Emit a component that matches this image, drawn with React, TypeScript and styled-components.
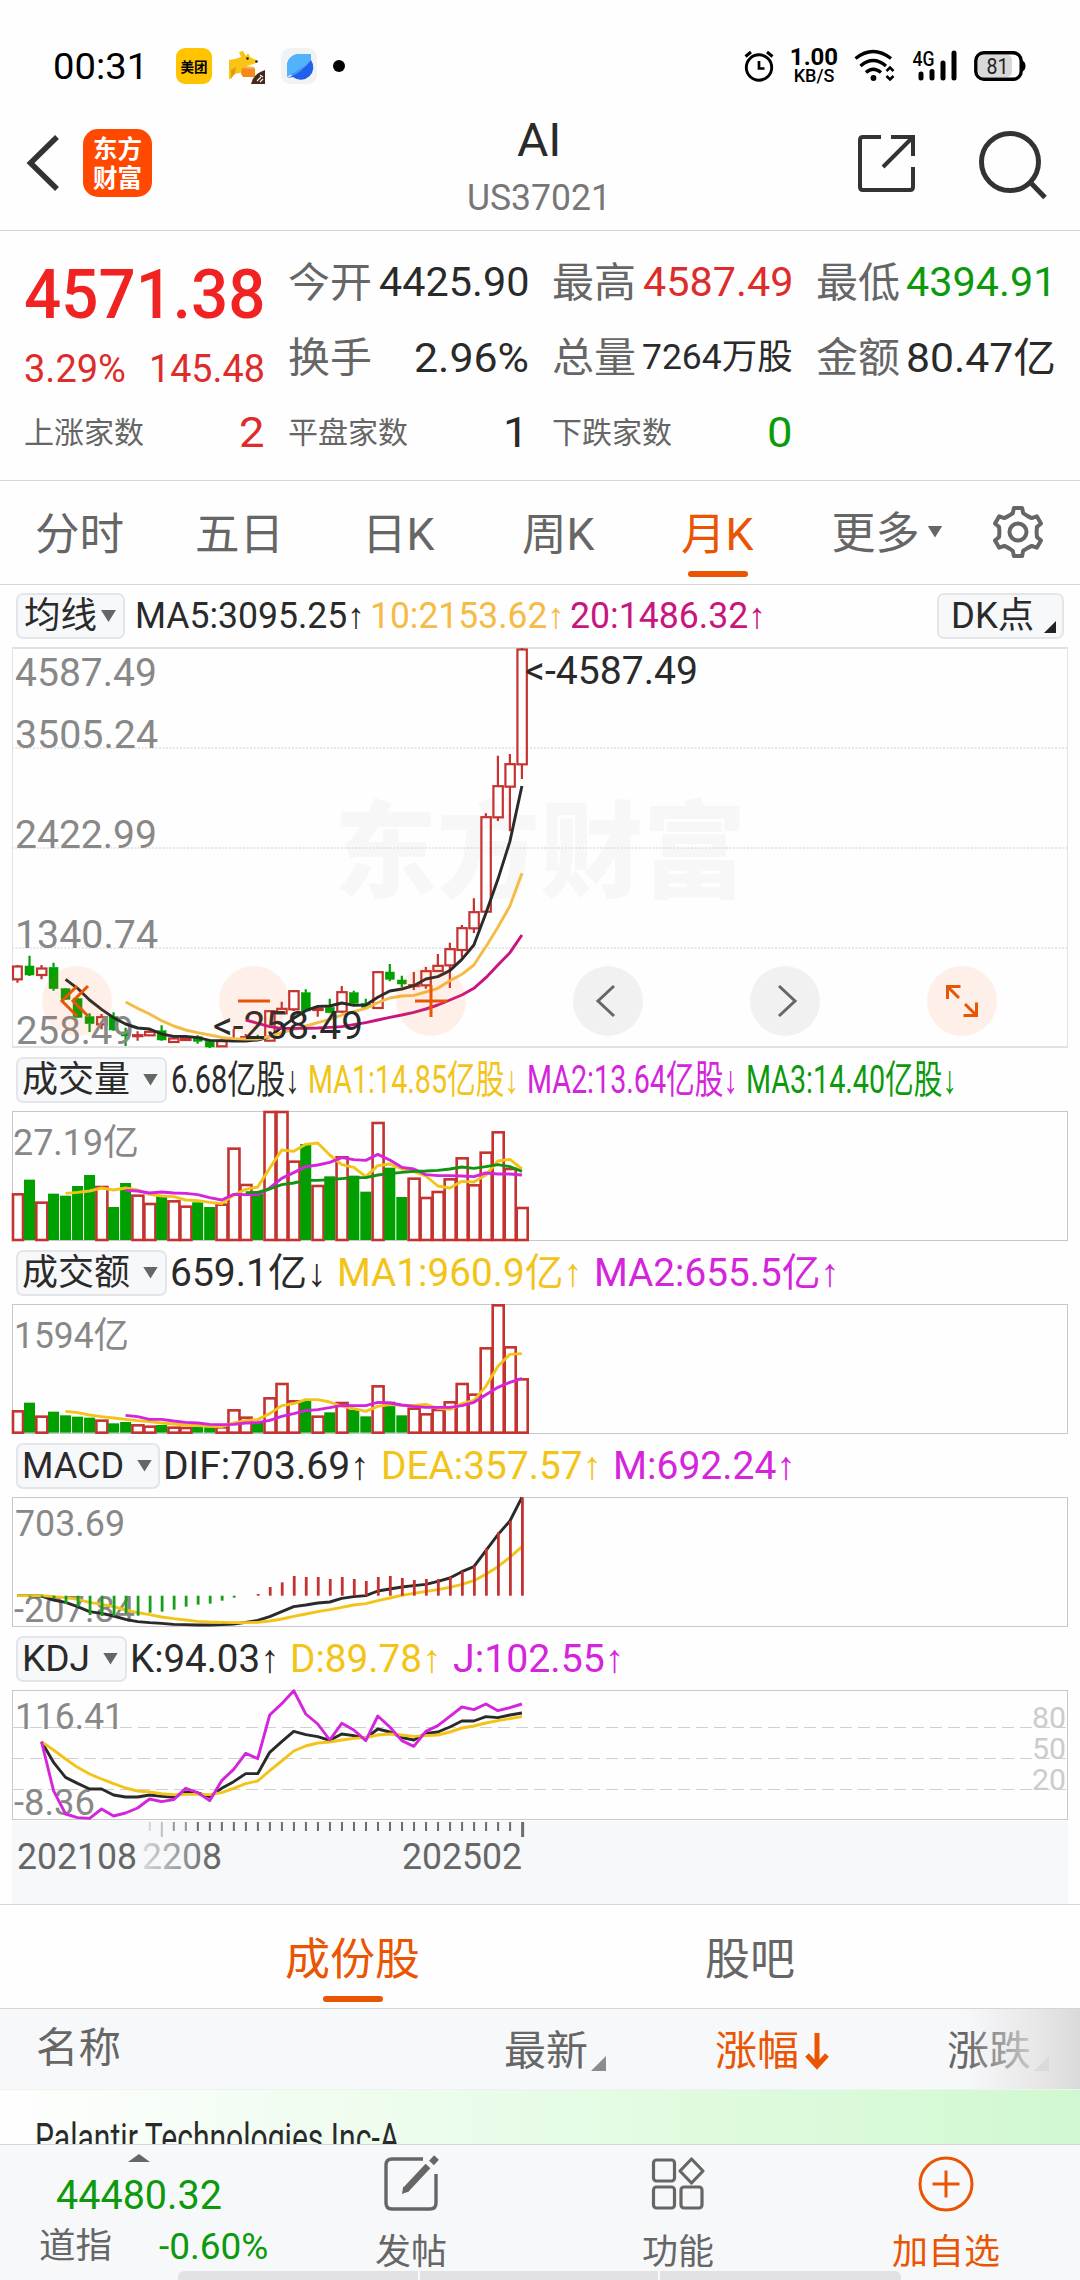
import React, { useLayoutEffect, useRef, useState } from "react";
import styled, { createGlobalStyle } from "styled-components";

const FONT = `Roboto, "Liberation Sans", "Noto Sans CJK SC", sans-serif`;
const C = {
  text: "#2a2a2a",
  label: "#666666",
  axis: "#888888",
  red: "#dd2c2c",
  green: "#0c9a0c",
  orange: "#ea5504",
  amber: "#f5bb45",
  gold: "#f2c418",
  magenta: "#c8157f",
  violet: "#d424dc",
  bar: "#c43330",
  barGreen: "#00a000",
  panel: "#f7f8fa",
  line: "#d5d5d7",
};

const Global = createGlobalStyle`
  * { box-sizing: border-box; }
  body { margin: 0; background: #fff; }
  svg { display: block; flex: none; overflow: visible; }
`;

const Screen = styled.main`
  width: 1080px;
  height: 2280px;
  overflow: hidden;
  display: flex;
  flex-direction: column;
  background: #fefefe;
  font-family: ${FONT};
  color: ${C.text};
`;

/* ---------- text that is squeezed to the width of its slot ---------- */

const Slot = styled.span<{ $w: number; $size: number; $color?: string; $weight?: number }>`
  display: block;
  flex: none;
  width: ${(p) => p.$w}px;
  font-size: ${(p) => p.$size}px;
  line-height: ${(p) => Math.round(p.$size * 1.2)}px;
  color: ${(p) => p.$color || "inherit"};
  font-weight: ${(p) => p.$weight || 400};
  white-space: pre;
`;
const Squeezed = styled.span`
  display: inline-block;
  padding-top: 1px;
  margin: 0 -1px -1px;
  transform-origin: 0 50%;
`;

type FitProps = { w: number; size: number; color?: string; weight?: number; children: React.ReactNode };

function Fit({ w, size, color, weight, children }: FitProps) {
  const ref = useRef<HTMLSpanElement>(null);
  const [k, setK] = useState(1);
  useLayoutEffect(() => {
    const measure = () => {
      if (ref.current && ref.current.offsetWidth) setK((w + 2) / ref.current.offsetWidth);
    };
    measure();
    document.fonts?.ready.then(measure);
  }, [w, size, children]);
  return (
    <Slot $w={w} $size={size} $color={color} $weight={weight}>
      <Squeezed ref={ref} style={{ transform: `scaleX(${k})` }}>
        {children}
      </Squeezed>
    </Slot>
  );
}

/* ---------- status bar ---------- */

const StatusBar = styled.div`
  height: 106px;
  padding: 26px 54px 0 54px;
  display: flex;
  align-items: center;
  justify-content: space-between;
  color: #000;
`;
const Cluster = styled.div<{ $gap: number }>`
  display: flex;
  align-items: center;
  gap: ${(p) => p.$gap}px;
`;
const MeituanBadge = styled.span`
  width: 36px;
  height: 36px;
  margin-left: 13px;
  border-radius: 9px;
  background: #ffc300;
  display: flex;
  align-items: center;
  justify-content: center;
  font: 700 13.5px/36px "Noto Sans CJK SC", sans-serif;
`;
const Dot = styled.span`
  width: 12px;
  height: 12px;
  border-radius: 50%;
  background: #000;
`;
const Speed = styled.div`
  width: 48px;
  display: flex;
  flex-direction: column;
  align-items: center;
  font-weight: 700;
  font-size: 24px;
  line-height: 20px;
  small {
    font-weight: 500;
    font-size: 18px;
    line-height: 18px;
  }
`;

const KangarooIcon = () => (
  <svg width="37" height="36" viewBox="0 0 37 36">
    <path d="M1 12 L7 11 L13 9 L11 4 L15 3 L18 8 L20 5 L22 9 L28 12 L28 15 L22 17 L17 19 L17 23 L12 25 L6 26 L3 31 L1 31Z" fill="#f9c414" />
    <path d="M3 22 L8 19 L7 26 L3 30Z" fill="#e09a10" />
    <path d="M14 20h13v9H15l-2-3z" fill="#f58a1c" />
    <path d="M14 20l3-2 9 1 1 2z" fill="#ffb24a" />
    <circle cx="19.500" cy="10.500" r="1.300" fill="#222" />
    <circle cx="28.500" cy="13.500" r="1.300" fill="#222" />
    <path d="M37 22v14H23q2-10 14-14z" fill="#46281a" />
    <path d="M29 33l4-4m-1 5l3-3m-3-4l3 2" stroke="#fff" strokeWidth="1.100" />
  </svg>
);
const BrowserIcon = () => (
  <svg width="36" height="36" viewBox="0 0 36 36">
    <rect width="36" height="36" rx="9" fill="#f1f2f4" />
    <circle cx="18" cy="18" r="12" fill="#3d97f8" />
    <path d="M6 29 V20 A12.500 12.500 0 0 1 20 6 L30 6 V14Z" fill="#52b2fb" />
    <path d="M6 30 Q20 26 30 12 A12.500 12.500 0 0 1 12 29Z" fill="#2160ea" />
  </svg>
);
const AlarmIcon = () => (
  <svg width="30" height="34" viewBox="0 0 30 34" fill="none" stroke="#000">
    <circle cx="15" cy="18.500" r="12.700" strokeWidth="2.900" />
    <path d="M15 12v7.500h5.500" strokeWidth="2.700" />
    <path d="M1.500 7.500l5.500-4.500M28.500 7.500L23 3" strokeWidth="3" />
  </svg>
);
const WifiIcon = () => (
  <svg width="42" height="34" viewBox="0 0 42 34" fill="none" stroke="#000" strokeWidth="3.300">
    <path d="M1.500 9.500Q19 -4.500 37 9.500M6.500 17Q19 6 32 17M12 23.500Q19 17 27 23.500" />
    <circle cx="19.500" cy="29" r="2.900" fill="#000" stroke="none" />
    <path d="M32.500 22l3.500-3.500 3.500 3.500M32.500 27l3.500 3.500 3.500-3.500" strokeWidth="2.600" />
  </svg>
);
const SignalIcon = () => (
  <svg width="46" height="34" viewBox="0 0 46 34">
    <text x="0.500" y="17" fontSize="20" fontWeight="500" textLength="22" lengthAdjust="spacingAndGlyphs" fontFamily="Roboto">
      4G
    </text>
    <g stroke="#000" strokeWidth="5" strokeLinecap="round">
      <path d="M9 25v4M20 22.500v6.500M31 14v15M42 4v25" />
    </g>
  </svg>
);
const BatteryIcon = () => (
  <svg width="52" height="30" viewBox="0 0 52 30">
    <rect x="1.800" y="1.800" width="45.400" height="26.400" rx="8" fill="#fff" stroke="#000" strokeWidth="3.400" />
    <rect x="4" y="4" width="34" height="22" rx="5" fill="#d8d8d8" />
    <path d="M47.500 9q4 1.500 4 6t-4 6z" />
    <text x="12.500" y="22.500" fontSize="22" textLength="22" lengthAdjust="spacingAndGlyphs" fontFamily="Roboto" fontWeight="400" fill="#222">
      81
    </text>
  </svg>
);

/* ---------- title bar ---------- */

const TitleBar = styled.header`
  height: 125px;
  padding: 0 34px 0 26px;
  border-bottom: 1px solid ${C.line};
  display: grid;
  grid-template-columns: 1fr auto 1fr;
  align-items: center;
`;
const TitleSide = styled.div<{ $end?: boolean }>`
  display: flex;
  align-items: center;
  gap: ${(p) => (p.$end ? 60 : 23)}px;
  justify-content: ${(p) => (p.$end ? "flex-end" : "flex-start")};
  padding-bottom: 11px;
`;
const TitleText = styled.h1`
  margin: 0 0 5px 6px;
  display: flex;
  flex-direction: column;
  align-items: center;
  font-weight: 400;
  gap: 8px;
`;
const Logo = styled.div`
  width: 69px;
  height: 68px;
  border-radius: 15px;
  background: #ff4800;
  color: #fff;
  display: flex;
  flex-direction: column;
  align-items: center;
  font: 700 24.5px/29px "Noto Sans CJK SC", sans-serif;
  padding-top: 4px;
`;

/* ---------- quote ---------- */

const Quote = styled.section`
  height: 250px;
  padding: 14px 25px 0;
  border-bottom: 1px solid ${C.line};
  display: grid;
  grid-template-columns: 239px 239px 239px 238px;
  column-gap: 25px;
`;
const QuoteColumn = styled.div<{ $lead?: boolean }>`
  display: flex;
  flex-direction: column;
  padding-top: ${(p) => (p.$lead ? 11 : 0)}px;
`;
const QuoteLine = styled.div<{ $h?: number }>`
  height: ${(p) => p.$h || 75}px;
  display: flex;
  align-items: center;
  justify-content: space-between;
`;

/* ---------- period tabs ---------- */

const Periods = styled.nav`
  height: 104px;
  border-bottom: 1px solid ${C.line};
  display: flex;
  color: ${C.label};
`;
const Period = styled.div<{ $on?: boolean }>`
  width: 159.500px;
  height: 103px;
  padding-top: 27px;
  display: flex;
  flex-direction: column;
  align-items: center;
  color: ${(p) => (p.$on ? C.orange : C.label)};
  &::after {
    content: "";
    width: 60px;
    height: 6px;
    margin-top: 9px;
    border-radius: 3px;
    background: ${(p) => (p.$on ? C.orange : "transparent")};
  }
`;
const More = styled.div`
  width: 194px;
  height: 103px;
  padding: 2px 0 0 35px;
  display: flex;
  align-items: center;
  gap: 9px;
`;
const SettingsSlot = styled.div`
  padding-top: 25px;
`;

const Triangle = styled.i<{ $w?: number; $h?: number; $lift?: number }>`
  width: ${(p) => p.$w || 15}px;
  height: ${(p) => p.$h || 12}px;
  margin-bottom: ${(p) => p.$lift || 0}px;
  background: #666;
  clip-path: polygon(0 0, 100% 0, 50% 100%);
`;
const Corner = styled.i<{ $s: number; $color: string }>`
  width: ${(p) => p.$s}px;
  height: ${(p) => p.$s}px;
  background: ${(p) => p.$color};
  clip-path: polygon(100% 0, 100% 100%, 0 100%);
`;

/* ---------- chart panels ---------- */

const IndicatorRow = styled.div<{ $h?: number; $gap: number }>`
  height: ${(p) => p.$h || 63}px;
  padding-left: 16px;
  display: flex;
  align-items: center;
  gap: ${(p) => p.$gap}px;
`;
const Picker = styled.div<{ $w: number; $gap: number; $after: number; $inset?: number }>`
  width: ${(p) => p.$w}px;
  height: 46px;
  margin-right: ${(p) => p.$after}px;
  padding-left: ${(p) => p.$inset ?? 5}px;
  flex: none;
  display: flex;
  align-items: center;
  gap: ${(p) => p.$gap}px;
  border: 2px solid #e3e5e9;
  border-radius: 7px;
  background: ${C.panel};
`;
const DkPicker = styled(Picker)`
  margin-left: auto;
  padding-left: 13px;
  ${Corner} {
    align-self: flex-end;
    margin-bottom: 4px;
  }
`;
const Panel = styled.div<{ $h?: number; $heavy?: boolean }>`
  position: relative;
  width: 1056px;
  height: ${(p) => p.$h || 130}px;
  margin-left: 12px;
  border: 1px solid ${(p) => (p.$heavy ? "#e2e2e2" : "#c8c8c8")};
  border-width: ${(p) => (p.$heavy ? "2px 1px 2px 1px" : "1px")};
  flex: none;
  > svg {
    margin: ${(p) => (p.$heavy ? "-2px" : "-1px")} 0 0 -1px;
    font-family: ${FONT};
  }
`;
const ChartButtons = styled.div`
  position: absolute;
  left: 29px;
  right: 70px;
  top: 317px;
  display: flex;
  justify-content: space-between;
`;
const Round = styled.button<{ $soft?: boolean }>`
  width: 70px;
  height: 70px;
  padding: 0;
  border: 0;
  border-radius: 50%;
  display: grid;
  place-items: center;
  background: ${(p) => (p.$soft ? "rgba(0,0,0,.05)" : "rgba(255,100,20,.09)")};
`;

const STEP = 12.01;
const cx = (i: number) => 5.5 + i * STEP;

/* [rising, high, body top, body bottom, low], three units to a pixel */
const candles: [number, number, number, number, number][] = [
  [1, 975, 978, 1018, 1028], [0, 947, 978, 1005, 1008], [1, 975, 984, 1005, 1018], [0, 968, 982, 1046, 1052],
  [0, 1044, 1046, 1078, 1080], [0, 1074, 1076, 1132, 1134], [0, 1120, 1130, 1151, 1176], [1, 1122, 1130, 1153, 1168],
  [0, 1117, 1130, 1170, 1172], [0, 1163, 1176, 1188, 1218], [1, 1174, 1184, 1188, 1202], [1, 1166, 1174, 1186, 1188],
  [0, 1156, 1172, 1200, 1202], [1, 1188, 1194, 1206, 1208], [1, 1186, 1192, 1200, 1202], [0, 1186, 1190, 1204, 1211],
  [0, 1198, 1204, 1221, 1224], [1, 1198, 1202, 1219, 1220], [1, 1167, 1197, 1202, 1204], [1, 1182, 1190, 1196, 1198],
  [0, 1184, 1190, 1200, 1202], [1, 1110, 1112, 1202, 1204], [1, 1085, 1105, 1120, 1122], [1, 1050, 1052, 1108, 1113],
  [0, 1048, 1058, 1113, 1114], [1, 1098, 1104, 1110, 1130], [0, 1076, 1102, 1118, 1120], [1, 1038, 1055, 1115, 1118],
  [0, 1052, 1058, 1090, 1092], [0, 1076, 1090, 1102, 1104], [1, 993, 995, 1104, 1106], [0, 972, 996, 1018, 1024],
  [0, 1007, 1020, 1032, 1042], [1, 996, 1034, 1038, 1050], [1, 981, 992, 1036, 1046], [1, 942, 976, 993, 995],
  [1, 908, 926, 976, 1044], [1, 855, 863, 930, 953], [1, 775, 815, 865, 879], [1, 520, 530, 815, 817],
  [1, 347, 437, 532, 543], [1, 342, 371, 440, 574], [1, 24, 27, 373, 417],
];
const rising = candles.map((c) => c[0] === 1);

const ma5 = [1018, 1045, 1080, 1108, 1133, 1152, 1164, 1167, 1182, 1189, 1189, 1193, 1201, 1202, 1203, 1203, 1200, 1190, 1162, 1135, 1112, 1099, 1098, 1089, 1096, 1095, 1072, 1053, 1047, 1037, 1017, 1010, 992, 958, 915, 820, 718, 604, 438];
const ma10 = [1086, 1105, 1122, 1142, 1158, 1170, 1178, 1185, 1192, 1196, 1197, 1197, 1190, 1178, 1168, 1158, 1148, 1138, 1125, 1115, 1105, 1088, 1074, 1068, 1066, 1056, 1045, 1022, 1003, 975, 920, 862, 798, 700];
const ma20 = [1140, 1150, 1160, 1165, 1165, 1165, 1164, 1162, 1160, 1154, 1148, 1140, 1132, 1125, 1117, 1107, 1095, 1080, 1065, 1045, 1013, 975, 938, 885];

const volume = [431, 390, 456, 432, 438, 409, 376, 409, 472, 400, 435, 460, 440, 452, 468, 458, 472, 462, 294, 403, 432, 184, 184, 333, 283, 406, 380, 320, 378, 426, 217, 354, 442, 384, 442, 424, 386, 323, 404, 306, 245, 355, 472];
const vol1 = [430, 427, 423, 414, 420, 414, 420, 433, 438, 440, 450, 452, 457, 461, 435, 418, 411, 355, 300, 304, 283, 279, 315, 344, 352, 380, 347, 342, 357, 365, 378, 408, 414, 394, 396, 375, 333, 328, 357];
const vol2 = [421, 423, 429, 426, 429, 430, 434, 443, 450, 433, 434, 434, 414, 385, 368, 350, 345, 337, 323, 329, 331, 313, 330, 352, 357, 374, 377, 377, 378, 380, 369, 372, 372, 375];
const vol3 = [428, 427, 417, 404, 399, 391, 391, 389, 386, 383, 383, 375, 371, 367, 364, 363, 361, 357, 351, 355, 350, 344, 350, 364];

const amount = [1082, 1059, 1098, 1086, 1097, 1101, 1104, 1110, 1121, 1117, 1124, 1128, 1126, 1131, 1132, 1132, 1133, 1130, 1079, 1101, 1118, 1043, 1000, 1052, 1052, 1098, 1088, 1057, 1080, 1100, 1007, 1056, 1097, 1074, 1091, 1078, 1055, 1000, 1032, 893, 764, 890, 986];
const amt1 = [1085, 1089, 1096, 1101, 1105, 1109, 1113, 1116, 1120, 1123, 1126, 1128, 1130, 1131, 1120, 1113, 1110, 1092, 1068, 1062, 1050, 1050, 1057, 1070, 1077, 1085, 1070, 1065, 1067, 1067, 1064, 1076, 1079, 1062, 1052, 1010, 950, 914, 912];
const amt2 = [1097, 1101, 1109, 1109, 1114, 1118, 1120, 1124, 1125, 1124, 1120, 1119, 1112, 1100, 1092, 1083, 1080, 1074, 1067, 1068, 1068, 1058, 1060, 1066, 1070, 1073, 1073, 1073, 1068, 1058, 1035, 1013, 998, 986];

const macd = [467, 470, 472, 476, 492, 500, 525, 528, 528, 520, 527, 518, 515, 509, 500, 494, 491, 482, 473, 467, 462, 441, 427, 408, 411, 411, 417, 411, 417, 423, 411, 408, 414, 420, 417, 417, 410, 394, 378, 325, 277, 243, 172];
const dif = [467, 467, 468, 480, 487, 500, 515, 520, 528, 538, 545, 548, 550, 553, 554, 555, 555, 554, 552, 547, 541, 530, 515, 500, 495, 489, 486, 475, 470, 467, 453, 447, 441, 437, 433, 424, 414, 395, 380, 332, 284, 243, 172];
const dea = [467, 467, 467, 470, 473, 478, 487, 493, 500, 510, 518, 524, 531, 536, 540, 544, 546, 547, 548, 548, 547, 543, 537, 529, 522, 515, 509, 502, 495, 491, 482, 474, 466, 460, 454, 449, 442, 433, 422, 403, 380, 352, 320];

const kdjK = [905, 967, 1012, 1030, 1047, 1047, 1065, 1071, 1071, 1065, 1069, 1072, 1056, 1059, 1070, 1045, 1025, 1001, 1001, 937, 905, 874, 884, 890, 901, 882, 887, 895, 867, 876, 893, 900, 880, 876, 861, 843, 843, 830, 833, 825, 819];
const kdjD = [905, 930, 957, 982, 1002, 1017, 1031, 1044, 1053, 1056, 1061, 1064, 1063, 1063, 1064, 1058, 1045, 1031, 1023, 992, 963, 933, 918, 909, 906, 900, 895, 893, 885, 882, 885, 889, 887, 885, 876, 864, 858, 849, 842, 836, 830];
const kdjJ = [905, 1052, 1122, 1133, 1135, 1107, 1128, 1119, 1104, 1077, 1085, 1079, 1045, 1058, 1082, 1022, 988, 940, 956, 825, 791, 752, 822, 852, 900, 850, 870, 902, 828, 861, 902, 919, 874, 857, 829, 801, 809, 792, 812, 803, 792];

type TrendProps = { data: number[]; top: number; color: string; from?: number };
const Trend = ({ data, top, color, from }: TrendProps) => {
  const start = from ?? 43 - data.length;
  return (
    <polyline
      fill="none"
      stroke={color}
      strokeWidth="2.900"
      strokeLinejoin="round"
      points={data.map((v, i) => `${cx(start + i)},${(v - top) / 3}`).join(" ")}
    />
  );
};

const Bars = ({ data, top, base }: { data: number[]; top: number; base: number }) => (
  <>
    {data.map((v, i) => {
      const y = (v - top) / 3;
      const h = (base - v) / 3;
      return rising[i] ? (
        <rect key={i} x={Math.max(cx(i) - 5.2, 1)} y={y + 1} width={i ? 11 : 10} height={h} fill="#fff" stroke={C.bar} strokeWidth="2.600" />
      ) : (
        <rect key={i} x={cx(i) - 5.5} y={y} width="11" height={h + 1} fill={C.barGreen} />
      );
    })}
  </>
);

type TagProps = { x: number; y: number; w: number; size?: number; color?: string; children: string };
const Tag = ({ x, y, w, size = 36, color = C.axis, children }: TagProps) => (
  <text x={x} y={y} fontSize={size} fill={color} textLength={w} lengthAdjust="spacingAndGlyphs">
    {children}
  </text>
);

const PriceChart = () => (
  <svg width="1056" height="401" viewBox="0 0 1056 401">
    <text x="322" y="242" fontSize="105" fontWeight="900" textLength="412" lengthAdjust="spacingAndGlyphs" fill="#f7f7f7" fontFamily="Noto Sans CJK SC">
      东方财富
    </text>
    {[101, 201, 301].map((y) => (
      <line key={y} x1="0" x2="1056" y1={y} y2={y} stroke="#dedede" strokeWidth="1.500" strokeDasharray="2 1.500" />
    ))}
    {candles.map(([up, hi, t, b, lo], i) => {
      const y = (v: number) => (v - 21) / 3;
      const color = up ? C.bar : C.barGreen;
      return (
        <g key={i} stroke={color} strokeWidth="2.200">
          <path d={`M${cx(i)} ${y(hi)}V${y(t)}M${cx(i)} ${y(b)}V${y(lo)}`} />
          {up ? (
            <rect x={Math.max(cx(i) - 4.5, 1)} y={y(t) + 0.5} width={i ? 9.4 : 8.8} height={Math.max(y(b) - y(t) - 0.5, 1)} fill="#fff" fillOpacity="0.500" />
          ) : (
            <rect x={cx(i) - 4.5} y={y(t)} width="9" height={Math.max(y(b) - y(t), 1)} strokeWidth="0.500" fill={color} />
          )}
        </g>
      );
    })}
    <Tag x={3} y={39} w={142} size={39}>4587.49</Tag>
    <Tag x={3} y={101} w={143} size={39}>3505.24</Tag>
    <Tag x={3} y={201} w={142} size={39}>2422.99</Tag>
    <Tag x={3} y={301} w={143} size={39}>1340.74</Tag>
    <Tag x={4} y={397} w={118} size={39}>258.49</Tag>
    <Trend data={ma5} top={21} color={C.text} />
    <Trend data={ma10} top={21} color={C.amber} />
    <Trend data={ma20} top={21} color={C.magenta} />
    <Tag x={513} y={37} w={173} size={39} color={C.text}>{"<-4587.49"}</Tag>
    <Tag x={201} y={392} w={150} size={39} color={C.text}>{"<-258.49"}</Tag>
  </svg>
);

const VolumeChart = () => (
  <svg width="1056" height="130" viewBox="0 0 1056 130">
    <Bars data={volume} top={184} base={568} />
    <Tag x={1} y={43.5} w={126}>27.19亿</Tag>
    <Trend data={vol1} top={183} color={C.gold} />
    <Trend data={vol2} top={183} color={C.violet} />
    <Trend data={vol3} top={183} color="#129412" />
  </svg>
);

const AmountChart = () => (
  <svg width="1056" height="130" viewBox="0 0 1056 130">
    <Bars data={amount} top={763} base={1146} />
    <Tag x={2} y={44} w={115}>1594亿</Tag>
    <Trend data={amt1} top={763} color={C.gold} />
    <Trend data={amt2} top={763} color={C.violet} />
  </svg>
);

const MacdChart = () => (
  <svg width="1056" height="130" viewBox="0 0 1056 130">
    <Tag x={3} y={39} w={110}>703.69</Tag>
    <Tag x={2} y={125} w={121}>-207.84</Tag>
    <Trend data={dif} top={171} color={C.text} />
    <Trend data={dea} top={171} color={C.gold} />
    {macd.map((v, i) => (
      <line key={i} x1={cx(i) + 0.5} x2={cx(i) + 0.5} y1={98.7} y2={(v - 171) / 3} stroke={v < 467 ? C.bar : "#1c9c1c"} strokeWidth="2.800" />
    ))}
  </svg>
);

const KdjChart = () => (
  <svg width="1056" height="130" viewBox="0 0 1056 130">
    {[37.5, 68.5, 99.5].map((y, i) => (
      <g key={y}>
        <line x1="0" x2="1054" y1={y} y2={y} stroke="#cfcfcf" strokeDasharray="12 6" />
        <Tag x={1020} y={y + 0.5} w={34} size={30} color="#cccccc">{["80", "50", "20"][i]}</Tag>
      </g>
    ))}
    <Tag x={3} y={39} w={109}>116.41</Tag>
    <Tag x={2} y={124.5} w={81}>-8.36</Tag>
    <Trend data={kdjK} top={750} color={C.text} from={2} />
    <Trend data={kdjD} top={750} color={C.gold} from={2} />
    <Trend data={kdjJ} top={750} color={C.violet} from={2} />
  </svg>
);

const TimeAxis = styled.div`
  width: 1056px;
  height: 84px;
  margin-left: 12px;
  border-top: 1px solid #fefefe;
  background: ${C.panel};
  flex: none;
  svg {
    font-family: ${FONT};
  }
`;
const AxisMarks = () => (
  <svg width="1056" height="82" viewBox="0 0 1056 82">
    <defs>
      <linearGradient id="fade" gradientUnits="userSpaceOnUse" x1="125" x2="200" y1="0" y2="0">
        <stop offset="0" stopColor="#666" stopOpacity="0.150" />
        <stop offset="1" stopColor="#666" />
      </linearGradient>
    </defs>
    {Array.from({ length: 32 }, (_, n) => n + 11).map((i) => (
      <rect
        key={i}
        x={cx(i) - 0.8}
        y="1"
        width={i === 42 ? 3 : 2}
        height={i === 12 || i === 42 ? 15 : 9}
        fill="#6c6c6c"
        opacity={i === 11 ? 0.25 : i === 12 ? 0.4 : i < 15 ? 0.7 : 1}
      />
    ))}
    <Tag x={5} y={48} w={120} color={C.label}>202108</Tag>
    <Tag x={130} y={48} w={80} color="url(#fade)">2208</Tag>
    <Tag x={390} y={48} w={120} color={C.label}>202502</Tag>
  </svg>
);

/* ---------- constituents ---------- */

const SubTabs = styled.nav`
  height: 105px;
  border-top: 1px solid ${C.line};
  border-bottom: 1px solid ${C.line};
  padding-left: 154px;
  display: flex;
`;
const SubTab = styled(Period)`
  width: 397px;
  height: 102px;
  padding-top: 28px;
  &::after {
    margin-top: 9px;
  }
`;
const TableHead = styled.div`
  position: relative;
  height: 81px;
  padding: 0 31px 2px 37px;
  display: flex;
  align-items: center;
  color: ${C.label};
  background: ${C.panel};
  border-bottom: 1px solid #f0f1f3;
  &::after {
    content: "";
    position: absolute;
    inset: 0 0 0 auto;
    width: 116px;
    background: linear-gradient(90deg, rgba(240, 240, 240, 0), rgba(228, 228, 228, 0.8) 60%, #dadada);
  }
`;
const HeadCell = styled.div<{ $left: number; $on?: boolean }>`
  margin-left: ${(p) => p.$left}px;
  padding-top: 6px;
  display: flex;
  align-items: center;
  gap: 4px;
  color: ${(p) => (p.$on ? C.orange : C.label)};
  ${Corner} {
    align-self: flex-end;
    margin-bottom: 5px;
  }
`;
const StockRow = styled.div`
  height: 54px;
  padding: 24px 0 0 36px;
  display: flex;
  overflow: hidden;
  background: linear-gradient(90deg, #fefefe, #e9fce9 45%, #d0f8d0);
`;

/* ---------- bottom bar ---------- */

const BottomBar = styled.footer`
  position: relative;
  height: 136px;
  border-top: 1px solid ${C.line};
  background: ${C.panel};
  display: flex;
  color: ${C.label};
`;
const IndexBox = styled.div`
  width: 277px;
  padding-top: 9px;
  display: flex;
  flex-direction: column;
  align-items: center;
`;
const UpMark = styled(Triangle)`
  transform: rotate(180deg);
`;
const IndexRow = styled.div`
  display: flex;
  align-items: center;
  gap: 49px;
  padding: 4px 0 0 40px;
  align-self: flex-start;
`;
const Action = styled.div<{ $on?: boolean }>`
  width: 267.500px;
  padding-top: 11px;
  display: flex;
  flex-direction: column;
  align-items: center;
  gap: 19px;
  color: ${(p) => (p.$on ? C.orange : C.label)};
`;
const HomeHandle = styled.div`
  position: absolute;
  left: 178px;
  bottom: 0;
  width: 723px;
  height: 9px;
  border-radius: 6px 6px 0 0;
  background: linear-gradient(90deg, #e2e2e4 240px, #fafafa 240px 242px, #e2e2e4 242px 480px, #fafafa 480px 482px, #e2e2e4 482px);
`;

const teeth = (() => {
  const pts: string[] = [];
  for (let i = 0; i < 6; i++) {
    const a = (i * Math.PI) / 3 - Math.PI / 2;
    [[-0.27, 19.5], [-0.17, 24.5], [0.17, 24.5], [0.27, 19.5], [0.52, 18.6]].forEach(([d, r]) =>
      pts.push(`${(26 + r * Math.cos(a + d)).toFixed(1)},${(26 + r * Math.sin(a + d)).toFixed(1)}`)
    );
  }
  return pts.join(" ");
})();

export default function App() {
  return (
    <>
      <Global />
      <Screen>
        <StatusBar>
          <Cluster $gap={16}>
            <Fit w={93} size={37}>00:31</Fit>
            <MeituanBadge>美团</MeituanBadge>
            <KangarooIcon />
            <BrowserIcon />
            <Dot />
          </Cluster>
          <Cluster $gap={16}>
            <AlarmIcon />
            <Speed>
              1.00
              <small>KB/S</small>
            </Speed>
            <WifiIcon />
            <SignalIcon />
            <BatteryIcon />
          </Cluster>
        </StatusBar>

        <TitleBar>
          <TitleSide>
            <svg width="34" height="56" viewBox="0 0 34 56" fill="none" stroke="#333" strokeWidth="5.500">
              <path d="M31 2L4.500 28 31 54" />
            </svg>
            <Logo>
              <span>东方</span>
              <span>财富</span>
            </Logo>
          </TitleSide>
          <TitleText>
            <Fit w={42} size={47}>AI</Fit>
            <Fit w={142} size={36} color="#777">US37021</Fit>
          </TitleText>
          <TitleSide $end>
            <svg width="60" height="60" viewBox="0 0 60 60" fill="none" stroke="#333" strokeWidth="4">
              <path d="M25 4H7Q4 4 4 7V54Q4 57 7 57H54Q57 57 57 54V34M35 4H57V23M57 4L27 34" />
            </svg>
            <svg width="70" height="70" viewBox="0 0 70 70" fill="none" stroke="#333" strokeWidth="5">
              <circle cx="34" cy="34" r="28.500" />
              <path d="M54 54L69 69.500" />
            </svg>
          </TitleSide>
        </TitleBar>

        <Quote>
          <QuoteColumn $lead>
            <QuoteLine><Fit w={239} size={69} color="#f02222" weight={500}>4571.38</Fit></QuoteLine>
            <QuoteLine>
              <Fit w={100} size={38} color={C.red}>3.29%</Fit>
              <Fit w={114} size={38} color={C.red}>145.48</Fit>
            </QuoteLine>
            <QuoteLine $h={52}>
              <Fit w={118} size={30} color={C.label}>上涨家数</Fit>
              <Fit w={24} size={42} color={C.red}>2</Fit>
            </QuoteLine>
          </QuoteColumn>
          <QuoteColumn>
            <QuoteLine>
              <Fit w={82} size={41} color={C.label}>今开</Fit>
              <Fit w={148} size={40}>4425.90</Fit>
            </QuoteLine>
            <QuoteLine>
              <Fit w={82} size={41} color={C.label}>换手</Fit>
              <Fit w={113} size={41}>2.96%</Fit>
            </QuoteLine>
            <QuoteLine>
              <Fit w={118} size={30} color={C.label}>平盘家数</Fit>
              <Fit w={24} size={42}>1</Fit>
            </QuoteLine>
          </QuoteColumn>
          <QuoteColumn>
            <QuoteLine>
              <Fit w={82} size={41} color={C.label}>最高</Fit>
              <Fit w={148} size={40} color={C.red}>4587.49</Fit>
            </QuoteLine>
            <QuoteLine>
              <Fit w={82} size={41} color={C.label}>总量</Fit>
              <Fit w={149} size={35}>7264万股</Fit>
            </QuoteLine>
            <QuoteLine>
              <Fit w={118} size={30} color={C.label}>下跌家数</Fit>
              <Fit w={24} size={42} color={C.green}>0</Fit>
            </QuoteLine>
          </QuoteColumn>
          <QuoteColumn>
            <QuoteLine>
              <Fit w={82} size={41} color={C.label}>最低</Fit>
              <Fit w={148} size={40} color={C.green}>4394.91</Fit>
            </QuoteLine>
            <QuoteLine>
              <Fit w={82} size={41} color={C.label}>金额</Fit>
              <Fit w={148} size={41}>80.47亿</Fit>
            </QuoteLine>
          </QuoteColumn>
        </Quote>

        <Periods>
          <Period><Fit w={87} size={44}>分时</Fit></Period>
          <Period><Fit w={87} size={44}>五日</Fit></Period>
          <Period><Fit w={71} size={44}>日K</Fit></Period>
          <Period><Fit w={71} size={44}>周K</Fit></Period>
          <Period $on><Fit w={71} size={44}>月K</Fit></Period>
          <More>
            <Fit w={86} size={44}>更多</Fit>
            <Triangle $lift={4} />
          </More>
          <SettingsSlot>
            <svg width="52" height="52" viewBox="0 0 52 52" fill="none" stroke="#666" strokeWidth="4" strokeLinejoin="round">
              <polygon points={teeth} />
              <circle cx="26" cy="26" r="8.500" />
            </svg>
          </SettingsSlot>
        </Periods>

        <IndicatorRow $h={62} $gap={7}>
          <Picker $w={109} $gap={5} $after={4} $inset={7}>
            <Fit w={71} size={36}>均线</Fit>
            <Triangle />
          </Picker>
          <Fit w={228} size={36}>MA5:3095.25↑</Fit>
          <Fit w={193} size={36} color={C.amber}>10:2153.62↑</Fit>
          <Fit w={194} size={36} color={C.magenta}>20:1486.32↑</Fit>
          <DkPicker $w={127} $gap={11} $after={16}>
            <Fit w={81} size={36}>DK点</Fit>
            <Corner $s={12} $color="#222" />
          </DkPicker>
        </IndicatorRow>
        <Panel $h={401} $heavy>
          <PriceChart />
          <ChartButtons>
            <Round>
              <svg width="34" height="34" viewBox="0 0 34 34" fill="none" stroke={C.orange} strokeWidth="3">
                <path d="M17 2L2 17 17 32M28 2L13 17 28 32" />
              </svg>
            </Round>
            <Round>
              <svg width="34" height="34" viewBox="0 0 34 34" stroke={C.orange} strokeWidth="3"><path d="M1 17h32" /></svg>
            </Round>
            <Round>
              <svg width="34" height="34" viewBox="0 0 34 34" stroke={C.orange} strokeWidth="3"><path d="M1 17h32M17 1v32" /></svg>
            </Round>
            <Round $soft>
              <svg width="34" height="34" viewBox="0 0 34 34" fill="none" stroke="#666" strokeWidth="3"><path d="M23 2L7 17 23 32" /></svg>
            </Round>
            <Round $soft>
              <svg width="34" height="34" viewBox="0 0 34 34" fill="none" stroke="#666" strokeWidth="3"><path d="M11 2L27 17 11 32" /></svg>
            </Round>
            <Round>
              <svg width="34" height="34" viewBox="0 0 34 34" fill="none" stroke={C.orange} strokeWidth="3">
                <path d="M15.500 2.500H2.500V15M2.500 2.500L14 14M31.500 18.500V31.500H18.500M31.500 31.500L20 20" />
              </svg>
            </Round>
          </ChartButtons>
        </Panel>

        <IndicatorRow $gap={10}>
          <Picker $w={151} $gap={14} $after={-5}>
            <Fit w={106} size={36}>成交量</Fit>
            <Triangle />
          </Picker>
          <Fit w={127} size={39}>6.68亿股↓</Fit>
          <Fit w={209} size={39} color={C.gold}>MA1:14.85亿股↓</Fit>
          <Fit w={209} size={39} color={C.violet}>MA2:13.64亿股↓</Fit>
          <Fit w={209} size={39} color={C.green}>MA3:14.40亿股↓</Fit>
        </IndicatorRow>
        <Panel><VolumeChart /></Panel>

        <IndicatorRow $gap={13}>
          <Picker $w={151} $gap={14} $after={-9}>
            <Fit w={106} size={36}>成交额</Fit>
            <Triangle />
          </Picker>
          <Fit w={154} size={39}>659.1亿↓</Fit>
          <Fit w={244} size={39} color={C.gold}>MA1:960.9亿↑</Fit>
          <Fit w={244} size={39} color={C.violet}>MA2:655.5亿↑</Fit>
        </IndicatorRow>
        <Panel><AmountChart /></Panel>

        <IndicatorRow $gap={13}>
          <Picker $w={144} $gap={14} $after={-9}>
            <Fit w={100} size={36}>MACD</Fit>
            <Triangle />
          </Picker>
          <Fit w={205} size={39}>DIF:703.69↑</Fit>
          <Fit w={219} size={39} color={C.gold}>DEA:357.57↑</Fit>
          <Fit w={181} size={39} color={C.violet}>M:692.24↑</Fit>
        </IndicatorRow>
        <Panel><MacdChart /></Panel>

        <IndicatorRow $gap={13}>
          <Picker $w={111} $gap={14} $after={-9}>
            <Fit w={66} size={36}>KDJ</Fit>
            <Triangle />
          </Picker>
          <Fit w={147} size={39}>K:94.03↑</Fit>
          <Fit w={150} size={39} color={C.gold}>D:89.78↑</Fit>
          <Fit w={169} size={39} color={C.violet}>J:102.55↑</Fit>
        </IndicatorRow>
        <Panel><KdjChart /></Panel>
        <TimeAxis><AxisMarks /></TimeAxis>

        <SubTabs>
          <SubTab $on><Fit w={133} size={44}>成份股</Fit></SubTab>
          <SubTab><Fit w={88} size={44}>股吧</Fit></SubTab>
        </SubTabs>
        <TableHead>
          <Fit w={83} size={41}>名称</Fit>
          <HeadCell $left={385}>
            <Fit w={82} size={41}>最新</Fit>
            <Corner $s={15} $color="#8c8c8c" />
          </HeadCell>
          <HeadCell $left={110} $on>
            <Fit w={82} size={41}>涨幅</Fit>
            <svg width="28" height="36" viewBox="-3 0 28 36" fill="none" stroke={C.orange} strokeWidth="5">
              <path d="M12 0V30M2 22L12 33 22 22" />
            </svg>
          </HeadCell>
          <HeadCell $left={118}>
            <Fit w={82} size={41}>涨跌</Fit>
            <Corner $s={15} $color="#b0b0b0" />
          </HeadCell>
        </TableHead>
        <StockRow>
          <Fit w={362} size={40}>Palantir Technologies Inc-A</Fit>
        </StockRow>

        <BottomBar>
          <IndexBox>
            <UpMark $w={22} $h={8} $lift={9} />
            <Fit w={164} size={40} color={C.green}>44480.32</Fit>
            <IndexRow>
              <Fit w={71} size={35}>道指</Fit>
              <Fit w={107} size={37} color={C.green}>-0.60%</Fit>
            </IndexRow>
          </IndexBox>
          <Action>
            <svg width="56" height="56" viewBox="0 0 56 56" fill="none" stroke="#666" strokeWidth="3.400">
              <path d="M40 3H9Q3 3 3 9V47Q3 53 9 53H47Q53 53 53 47V18" />
              <path d="M22.500 34L45 10" strokeWidth="6.500" />
              <path d="M48.500 7L53.500 1.500" strokeWidth="6.500" />
              <path d="M19 38l1.200-7.500 5.500 5z" fill="#666" stroke="none" />
            </svg>
            <Fit w={70} size={35}>发帖</Fit>
          </Action>
          <Action>
            <svg width="56" height="56" viewBox="0 0 56 56" fill="none" stroke="#666" strokeWidth="3.200">
              <rect x="3.500" y="4" width="21" height="21" rx="3" />
              <rect x="3.500" y="31" width="21" height="21" rx="3" />
              <rect x="31" y="31" width="21" height="21" rx="3" />
              <path d="M41.500 3L53 15 41.500 27 30 15Z" strokeLinejoin="round" />
            </svg>
            <Fit w={70} size={35}>功能</Fit>
          </Action>
          <Action $on>
            <svg width="56" height="56" viewBox="0 0 56 56" fill="none" stroke={C.orange} strokeWidth="3">
              <circle cx="28" cy="28" r="26" />
              <path d="M14.500 28H41.500M28 14.500V41.500" />
            </svg>
            <Fit w={106} size={35}>加自选</Fit>
          </Action>
          <HomeHandle />
        </BottomBar>
      </Screen>
    </>
  );
}
